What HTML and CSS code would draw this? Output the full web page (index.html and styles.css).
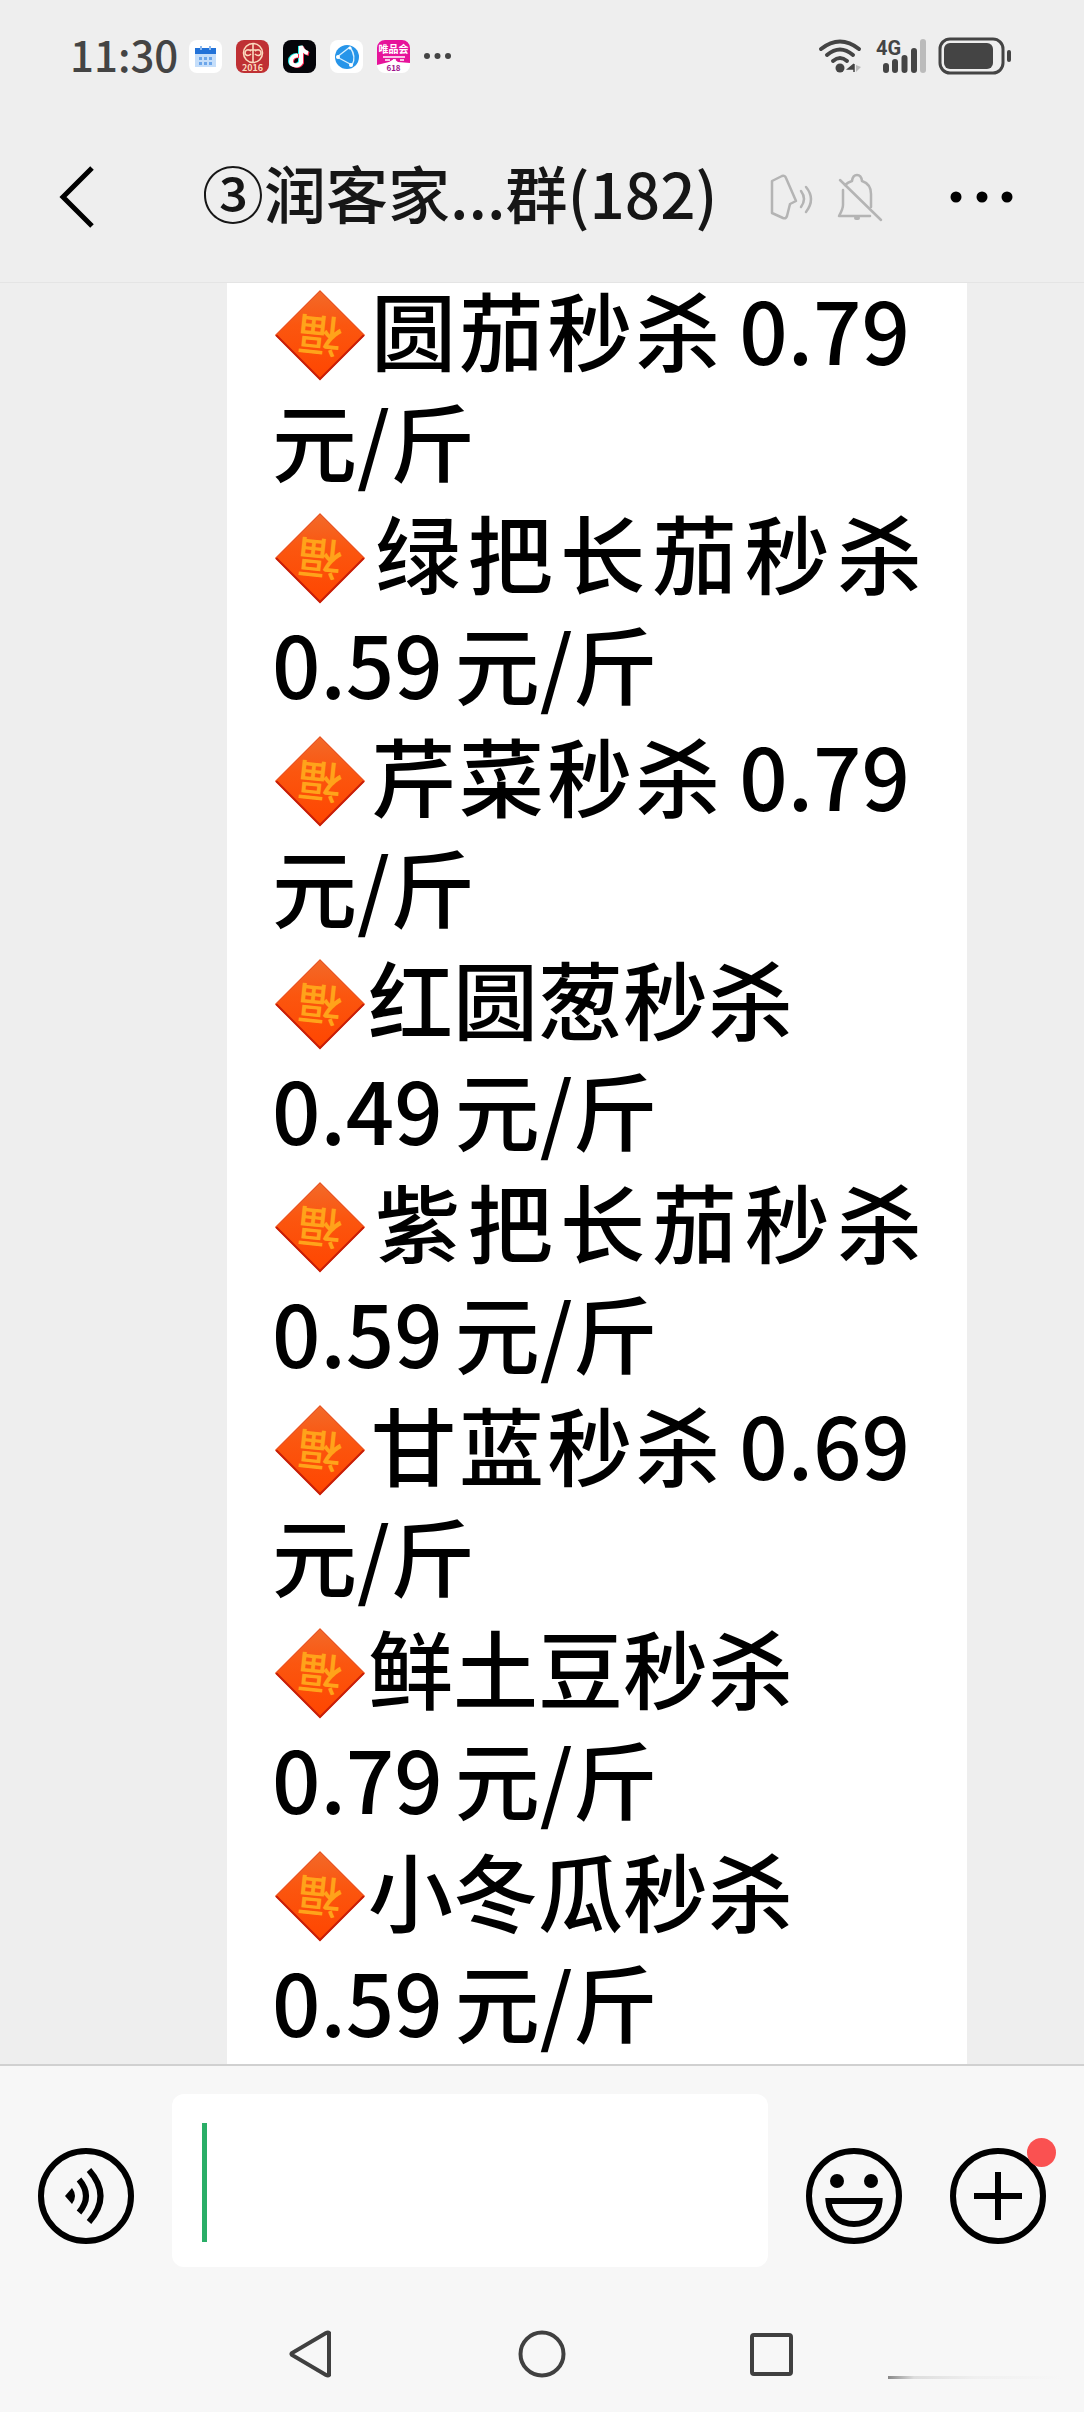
FILE: index.html
```html
<!DOCTYPE html>
<html lang="zh-CN">
<head>
    <meta charset="UTF-8"/>
    <meta name="viewport" content="width=device-width, initial-scale=1"/>
    <title>群聊</title>
    <link rel="stylesheet" href="styles.css">
</head>
<body>
<!-- 共用图形 -->
<svg class="defs" aria-hidden="true">
    <defs>
        <linearGradient id="fu-fill" x1="0" y1="0" x2="0" y2="1">
            <stop offset="0" stop-color="#f26a2a"/>
            <stop offset="0.4" stop-color="#fb560f"/>
            <stop offset="1" stop-color="#ff4500"/>
        </linearGradient>
        <symbol id="fu" viewBox="0 0 92 92">
            <path d="M46 1 91 46 46 91 1 46Z" fill="url(#fu-fill)"/>
            <path d="M2 46 46 90 90 46" fill="none" stroke="#c81e08" stroke-width="2"/>
            <path d="M2 46 46 2 90 46" fill="none" stroke="#e4512a" stroke-width="1"/>
            <text x="46" y="62" text-anchor="middle" transform="rotate(186 46 46)" class="fu-text">福</text>
        </symbol>
    </defs>
</svg>

<div class="status-bar">
    <span class="clock">11:30</span>
    <div class="notices">
        <svg class="app-icon" viewBox="0 0 33 33">
            <rect width="33" height="33" rx="8" fill="#fff"/>
            <path d="M6 12h21v15H6z" fill="#c5defa"/>
            <path d="M6 8h21v6H6z" fill="#2272d8"/>
            <path d="M12 6v4M21 6v4" stroke="#8bb8ef" stroke-width="2"/>
            <path d="M10 17h3v3h-3zm5 0h3v3h-3zm5 0h3v3h-3zM10 22h3v3h-3zm5 0h3v3h-3zm5 0h3v3h-3z" fill="#6ca6ea"/>
        </svg>
        <svg class="app-icon" viewBox="0 0 33 33">
            <rect width="33" height="33" rx="8" fill="#bf3034"/>
            <g fill="none" stroke="#fbd9bd" stroke-width="1.6">
                <circle cx="17" cy="13" r="9.5"/>
                <path d="M17 4v18M15 11c-4-3-6 0-6 2s3 4 6 1M19 11c4-3 6 0 6 2s-3 4-6 1M11 10h12"/>
            </g>
            <text x="16.500" y="31" text-anchor="middle" class="badge-text year">2016</text>
        </svg>
        <svg class="app-icon" viewBox="0 0 33 33">
            <rect width="33" height="33" rx="8" fill="#05050a"/>
            <g fill="none" stroke-width="4">
                <path d="M14 15c-4 0-7 2-7 6s7 6 10 1V6c1 4 3 6 7 7" stroke="#25f4ee"/>
                <path d="M16 16c-4 0-7 2-7 6s7 6 10 1V7c1 4 3 6 7 7" stroke="#fe2c55"/>
                <path d="M15 15.500c-4 0-7 2-7 6s7 6 10 1V6c1 4 3 6 7 7" stroke="#fff"/>
            </g>
        </svg>
        <svg class="app-icon" viewBox="0 0 33 33">
            <rect width="33" height="33" rx="8" fill="#fff"/>
            <circle cx="17" cy="17" r="12" fill="#2795e9"/>
            <path d="M7 17 20 7M7 17l15 8M22 25c3-5 2-12-2-18" fill="none" stroke="#d8f0ff" stroke-width="1.400"/>
            <circle cx="8" cy="17" r="2" fill="#fff"/>
            <circle cx="20" cy="8" r="1.500" fill="#fff"/>
            <circle cx="21" cy="25" r="2" fill="#fff"/>
        </svg>
        <svg class="app-icon" viewBox="0 0 33 33">
            <rect width="33" height="33" rx="8" fill="#fff"/>
            <path d="M0 25V8a8 8 0 0 1 8-8h17a8 8 0 0 1 8 8v15l-12-1-4-3-5 3Z" fill="#e6139a"/>
            <text x="16.500" y="13" text-anchor="middle" class="badge-text brand">唯品会</text>
            <path d="M6 17h22M8 20h5m3 0h3m4 0h4" stroke="#fff" stroke-width="1.500"/>
            <text x="16.500" y="31" text-anchor="middle" class="badge-text sale">618</text>
        </svg>
        <svg class="more-notices" viewBox="0 0 27 6">
            <circle cx="3" cy="3" r="3"/>
            <circle cx="13.500" cy="3" r="3"/>
            <circle cx="24" cy="3" r="3"/>
        </svg>
    </div>
    <div class="signals">
        <svg class="wifi" viewBox="0 0 46 36">
            <g fill="none" stroke="#444" stroke-width="4" stroke-linecap="round">
                <path d="M3 11Q22-4 41 11"/>
                <path d="M9 17Q22 6 35 17"/>
                <path d="M15 23Q22 17 29 23"/>
            </g>
            <circle cx="22" cy="30" r="4.500" fill="#444"/>
            <path d="M36 26v8M36 26l-6 5h6" fill="#444" stroke="#444" stroke-width="1.500"/>
            <path d="M38 27v7l5-5Z" fill="#bbb"/>
        </svg>
        <svg class="cell" viewBox="0 0 50 36">
            <text x="0" y="17" class="cell-text">4G</text>
            <g fill="none" stroke="#444" stroke-width="6" stroke-linecap="round">
                <path d="M10 28v4M19 24v8M28.500 20v12M38 13v19"/>
                <path d="M47 4v28" stroke="#bbb"/>
            </g>
        </svg>
        <svg class="battery" viewBox="0 0 74 38">
            <rect x="2" y="2" width="63" height="34" rx="10" fill="none" stroke="#444" stroke-width="3"/>
            <rect x="6" y="6" width="49" height="26" rx="6" fill="#444"/>
            <rect x="69" y="13" width="4" height="12" rx="2" fill="#444"/>
        </svg>
    </div>
</div>

<header class="chat-header">
    <button class="back" type="button" aria-label="返回">
        <svg viewBox="0 0 34 62"><path d="M32 2 3 31l29 29" fill="none" stroke="#000" stroke-width="5"/></svg>
    </button>
    <h1>③润客家...群(182)</h1>
    <div class="chat-flags">
        <svg class="ear" viewBox="0 0 44 48">
            <g fill="none" stroke="#b4b4b4" stroke-width="2.500" stroke-linejoin="round" stroke-linecap="round">
                <path d="M2 8 12 3q3-1 4 2l10 23-6 3-3 12q-1 3-4 2L2 40Z"/>
                <path d="M31 18q6 8 0 16M36 14q10 12 0 25"/>
            </g>
        </svg>
        <svg class="bell" viewBox="0 0 46 48">
            <g fill="none" stroke="#b4b4b4" stroke-width="2.500" stroke-linejoin="round" stroke-linecap="round">
                <path d="M9 12q3-3 7-4c1-8 9-8 10 0q9 3 9 13v13M7 17v15q0 4-4 11h31"/>
                <path d="M4 7 45 47"/>
                <path d="M20 45h2" stroke-width="4"/>
            </g>
        </svg>
    </div>
    <button class="menu" type="button" aria-label="更多">
        <svg viewBox="0 0 64 12">
            <circle cx="6" cy="6" r="5.500"/>
            <circle cx="32" cy="6" r="5.500"/>
            <circle cx="57" cy="6" r="5.500"/>
        </svg>
    </button>
</header>

<main class="chat">
    <div class="bubble">
        <p class="item">
            <span class="line full with-price"><svg class="fu"><use href="#fu"/></svg>圆茄秒杀<span class="price">0.79</span></span>
            <span class="line">元/斤</span>
        </p>
        <p class="item">
            <span class="line full"><svg class="fu"><use href="#fu"/></svg>绿把长茄秒杀</span>
            <span class="line"><span class="price">0.59</span>元/斤</span>
        </p>
        <p class="item">
            <span class="line full with-price"><svg class="fu"><use href="#fu"/></svg>芹菜秒杀<span class="price">0.79</span></span>
            <span class="line">元/斤</span>
        </p>
        <p class="item">
            <span class="line"><svg class="fu"><use href="#fu"/></svg>红圆葱秒杀</span>
            <span class="line"><span class="price">0.49</span>元/斤</span>
        </p>
        <p class="item">
            <span class="line full"><svg class="fu"><use href="#fu"/></svg>紫把长茄秒杀</span>
            <span class="line"><span class="price">0.59</span>元/斤</span>
        </p>
        <p class="item">
            <span class="line full with-price"><svg class="fu"><use href="#fu"/></svg>甘蓝秒杀<span class="price">0.69</span></span>
            <span class="line">元/斤</span>
        </p>
        <p class="item">
            <span class="line"><svg class="fu"><use href="#fu"/></svg>鲜土豆秒杀</span>
            <span class="line"><span class="price">0.79</span>元/斤</span>
        </p>
        <p class="item">
            <span class="line"><svg class="fu"><use href="#fu"/></svg>小冬瓜秒杀</span>
            <span class="line"><span class="price">0.59</span>元/斤</span>
        </p>
    </div>
</main>

<footer>
    <form class="composer">
        <button class="tool" type="button" aria-label="语音">
            <svg viewBox="0 0 96 96">
                <g fill="none" stroke="#000" stroke-width="6">
                    <circle cx="48" cy="48" r="45"/>
                    <path d="M41 31.500q14 16.500 0 33M51 22q23 26 0 52"/>
                </g>
                <path d="M27 48l7-8q6 8 0 16Z"/>
            </svg>
        </button>
        <div class="input-wrap">
            <textarea aria-label="消息"></textarea>
            <span class="caret"></span>
        </div>
        <button class="tool" type="button" aria-label="表情">
            <svg viewBox="0 0 96 96">
                <g fill="none" stroke="#000" stroke-width="6">
                    <circle cx="48" cy="48" r="45"/>
                    <path d="M22.500 53h51c-1 14-11 23-25.500 23s-24.500-9-25.500-23Z"/>
                </g>
                <circle cx="31" cy="33" r="7"/>
                <circle cx="65" cy="33" r="7"/>
            </svg>
        </button>
        <button class="tool" type="button" aria-label="更多功能">
            <svg viewBox="0 0 96 96">
                <g fill="none" stroke="#000" stroke-width="6">
                    <circle cx="48" cy="48" r="45"/>
                    <path d="M48 24v48M24 48h48"/>
                </g>
            </svg>
            <span class="dot"></span>
        </button>
    </form>
    <nav class="system-nav">
        <button type="button" aria-label="后退">
            <svg viewBox="0 0 48 48"><path d="M41 3v42q-1 1-3 0L4 25q-1-1 0-2L38 3q2-1 3 0Z"/></svg>
        </button>
        <button type="button" aria-label="主页">
            <svg viewBox="0 0 48 48"><circle cx="24" cy="24" r="21.500"/></svg>
        </button>
        <button type="button" aria-label="最近任务">
            <svg viewBox="0 0 48 48"><rect x="4" y="5" width="39" height="39" rx="2"/></svg>
        </button>
        <span class="trace"></span>
    </nav>
</footer>
</body>
</html>
```
FILE: styles.css
```css
* {
    box-sizing: border-box;
}

body {
    margin: 0;
    height: 100vh;
    display: flex;
    flex-direction: column;
    background: #eee;
    color: #000;
    font-family: "Noto Sans CJK SC", sans-serif;
    font-weight: 500;
}

button {
    padding: 0;
    border: 0;
    background: none;
}

svg {
    display: block;
    overflow: visible;
}

.defs {
    position: absolute;
    width: 0;
    height: 0;
}

.fu-text {
    font-size: 44px;
    font-weight: 500;
    fill: #ffa31a;
}

/* 状态栏 */
.status-bar {
    flex: none;
    display: flex;
    align-items: center;
    height: 112px;
    padding: 0 72px 0 70px;
}

.clock {
    color: #444;
    font-size: 42px;
    line-height: 60px;
    padding-bottom: 4px;
}

.notices {
    display: flex;
    align-items: center;
    gap: 14px;
    margin-left: 11px;
}

.app-icon {
    width: 33px;
    height: 33px;
}

.badge-text {
    font-weight: 700;
}

.year {
    font-size: 9px;
    fill: #fbd9bd;
}

.brand {
    font-size: 10px;
    fill: #fff;
}

.sale {
    font-size: 8px;
    fill: #a0148c;
}

.more-notices {
    width: 27px;
    fill: #444;
}

.signals {
    display: flex;
    align-items: center;
    gap: 12px;
    margin-left: auto;
}

.wifi {
    width: 46px;
}

.cell {
    width: 50px;
}

.cell-text {
    font-family: Roboto, sans-serif;
    font-size: 20px;
    font-weight: 700;
    fill: #444;
}

.battery {
    width: 74px;
}

/* 标题 */
.chat-header {
    flex: none;
    display: flex;
    align-items: center;
    height: 171px;
    padding: 0 70px 0 60px;
    border-bottom: 1px solid #e4e4e4;
}

.back svg {
    width: 34px;
}

h1 {
    margin: 0 0 0 108px;
    padding-bottom: 10px;
    color: #161616;
    font-size: 62px;
    font-weight: 500;
    line-height: 80px;
    white-space: nowrap;
}

.chat-flags {
    display: flex;
    gap: 22px;
    margin-left: 52px;
}

.ear {
    width: 44px;
}

.bell {
    width: 46px;
}

.menu {
    margin-left: auto;
}

.menu svg {
    width: 64px;
}

/* 聊天内容 */
.chat {
    flex: 1;
    min-height: 0;
    display: flex;
    flex-direction: column;
    justify-content: flex-end;
    padding: 0 117px 0 227px;
    overflow: hidden;
}

.bubble {
    display: flex;
    flex-direction: column;
    gap: 1px;
    padding: 0 45px 9px;
    background: #fff;
}

.item {
    margin: 0;
    font-size: 85px;
    line-height: 111px;
}

.line {
    display: block;
    height: 111px;
    white-space: nowrap;
}

.full {
    text-align: justify;
    text-align-last: justify;
}

.with-price {
    padding-right: 12px;
}

.fu {
    display: inline-block;
    width: 96px;
    height: 92px;
    vertical-align: -16px;
}

.full .price {
    margin-left: 16px;
}

.price:first-child {
    margin-right: 12px;
}

/* 输入栏 */
footer {
    flex: none;
    border-top: 2px solid #d0d0d0;
    background: #f7f7f7;
}

.composer {
    display: flex;
    align-items: flex-end;
    gap: 48px;
    padding: 28px 38px 0;
}

.tool {
    position: relative;
    flex: none;
    width: 96px;
    height: 96px;
    margin-bottom: 23px;
}

.input-wrap {
    position: relative;
    flex: 1;
    height: 173px;
    margin: 0 -10px;
}

textarea {
    display: block;
    width: 100%;
    height: 100%;
    padding: 29px 30px;
    border: 0;
    border-radius: 12px;
    background: #fff;
    font: inherit;
    font-size: 84px;
    resize: none;
}

.caret {
    position: absolute;
    top: 29px;
    left: 30px;
    width: 5px;
    height: 119px;
    background: #2aae67;
}

.dot {
    position: absolute;
    top: -10px;
    right: -10px;
    width: 29px;
    height: 29px;
    border-radius: 50%;
    background: #fa5151;
}

/* 系统导航 */
.system-nav {
    position: relative;
    display: flex;
    justify-content: center;
    gap: 182px;
    padding: 63px 0 34px;
}

.system-nav svg {
    width: 48px;
    fill: none;
    stroke: #404040;
    stroke-width: 4;
}

.trace {
    position: absolute;
    right: 22px;
    bottom: 33px;
    width: 174px;
    height: 3px;
    background: linear-gradient(to right, #888, #ddd 15%, #f0f0f0 50%, #f7f7f7);
}
```
